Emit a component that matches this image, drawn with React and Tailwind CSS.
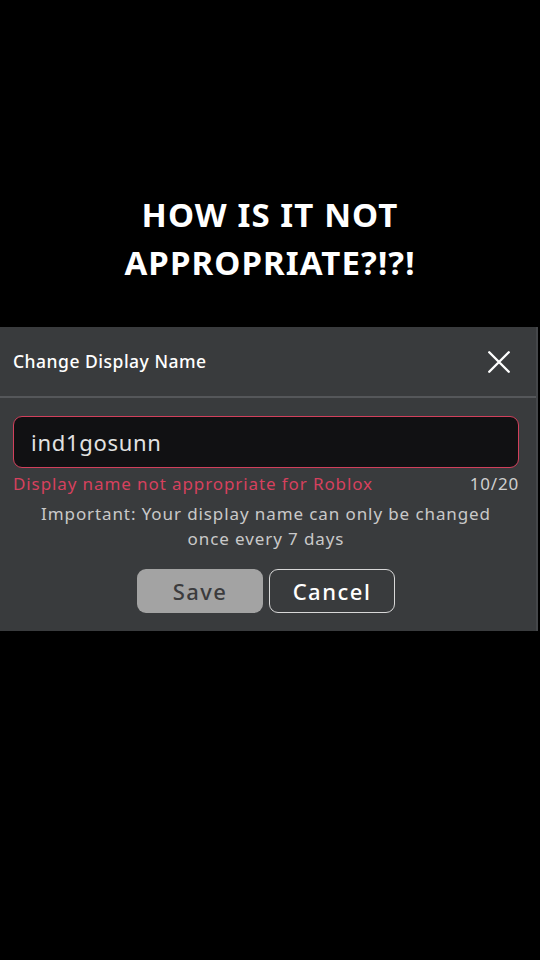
import React from 'react';

const CloseIcon = () => (
  <svg width="26" height="26" viewBox="0 0 24 24" fill="none" stroke="#ffffff" strokeWidth="2.2" strokeLinecap="round">
    <path d="M3 3L21 21M21 3L3 21" />
  </svg>
);

const App = () => {
  return (
    <div className="min-h-[960px] w-[540px] bg-black flex flex-col font-['Noto_Sans','Open_Sans',sans-serif]">
      {/* Caption */}
      <div className="pt-[191px] text-center text-white font-bold text-[33px] leading-[48px] tracking-[1.1px]">
        <p>HOW IS IT NOT</p>
        <p>APPROPRIATE?!?!</p>
      </div>

      {/* Dialog */}
      <div className="mt-[40px] w-[538px] bg-[#393b3d] border-r-2 border-[#45474a]">
        <div className="h-[69px] flex items-center justify-between pl-[13px] pr-[24px]">
          <h2 className="text-[17.5px] font-medium text-white tracking-[0.5px]">Change Display Name</h2>
          <CloseIcon />
        </div>
        <div className="h-[2px] bg-[#55575a]" />

        <div className="pl-[13px] pr-[17px] pt-[18px] pb-[18px]">
          <div className="h-[52px] rounded-[9px] border-[1.5px] border-[#d2405c] bg-[#111113] flex items-center px-[17px]">
            <span className="text-[22px] text-[#e2e2e2] tracking-[0.7px]">ind1gosunn</span>
          </div>
          <div className="flex justify-between items-center mt-[4px] text-[17px] leading-[24px]">
            <span className="text-[#d6415e] tracking-[0.9px]">Display name not appropriate for Roblox</span>
            <span className="text-[#cfcfcf] tracking-[0.8px]">10/20</span>
          </div>
          <p className="mt-[5px] mx-auto w-[470px] text-center text-[17px] leading-[25px] text-[#c9c9c9] tracking-[0.9px]">
            Important: Your display name can only be changed once every 7 days
          </p>
          <div className="mt-[18px] flex justify-center gap-[6px]">
            <button className="w-[126px] h-[44px] rounded-[9px] bg-[#a3a3a3] text-[#3b3b3d] text-[22px] font-medium tracking-[1.4px]">Save</button>
            <button className="w-[126px] h-[44px] rounded-[9px] border-[1.5px] border-[#d8d8d8] text-white text-[22px] font-medium tracking-[1.5px]">Cancel</button>
          </div>
        </div>
      </div>
    </div>
  );
};

export default App;
